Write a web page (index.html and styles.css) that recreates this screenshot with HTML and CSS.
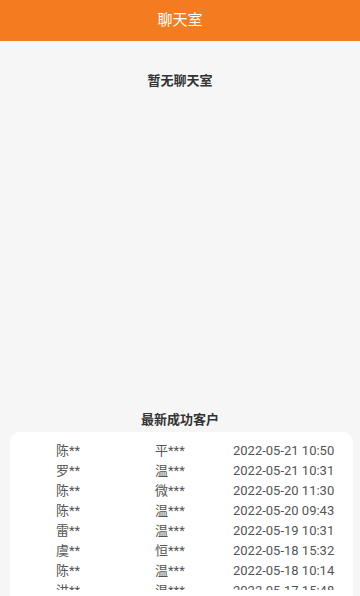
FILE: index.html
```html
<!DOCTYPE html>
<html lang="zh-CN">
<head>
    <meta charset="UTF-8">
    <title>聊天室</title>
    <link rel="stylesheet" href="styles.css">
</head>
<body>
    <div class="header">聊天室</div>

    <div class="empty">暂无聊天室</div>

    <div class="recent">
        <h2>最新成功客户</h2>
        <div class="card">
            <div class="list">
                <div class="row"><span>陈**</span><span>平***</span><span>2022-05-21 10:50</span></div>
                <div class="row"><span>罗**</span><span>温***</span><span>2022-05-21 10:31</span></div>
                <div class="row"><span>陈**</span><span>微***</span><span>2022-05-20 11:30</span></div>
                <div class="row"><span>陈**</span><span>温***</span><span>2022-05-20 09:43</span></div>
                <div class="row"><span>雷**</span><span>温***</span><span>2022-05-19 10:31</span></div>
                <div class="row"><span>虞**</span><span>恒***</span><span>2022-05-18 15:32</span></div>
                <div class="row"><span>陈**</span><span>温***</span><span>2022-05-18 10:14</span></div>
                <div class="row"><span>洪**</span><span>温***</span><span>2022-05-17 15:48</span></div>
                <div class="row"><span>陈**</span><span>温***</span><span>2022-05-17 09:20</span></div>
            </div>
        </div>
    </div>
</body>
</html>
```

FILE: styles.css
```css
body {
    margin: 0;
    background: #f6f6f6;
    font-family: Roboto, "Noto Sans CJK SC", sans-serif;
    color: #333;
    overflow: hidden;
}

.header {
    height: 41px;
    line-height: 41px;
    background: #f47c20;
    color: #fff;
    font-size: 15px;
    text-align: center;
}

.empty {
    height: 339px;
    padding-top: 31px;
    line-height: 18px;
    font-size: 13px;
    font-weight: bold;
    text-align: center;
    color: #333;
}

.recent h2 {
    margin: 0;
    height: 21px;
    line-height: 18px;
    font-size: 13px;
    font-weight: bold;
    text-align: center;
    color: #333;
}

.card {
    margin: 0 7px 0 10px;
    padding-top: 9px;
    height: 155px;
    background: #fff;
    border-radius: 10px 10px 0 0;
}

.list {
    height: 149px;
    overflow: hidden;
}

.row {
    display: grid;
    grid-template-columns: 99px 78px 1fr;
    padding-left: 46px;
    height: 20px;
    line-height: 20px;
    font-size: 13px;
    color: #555;
}
```
